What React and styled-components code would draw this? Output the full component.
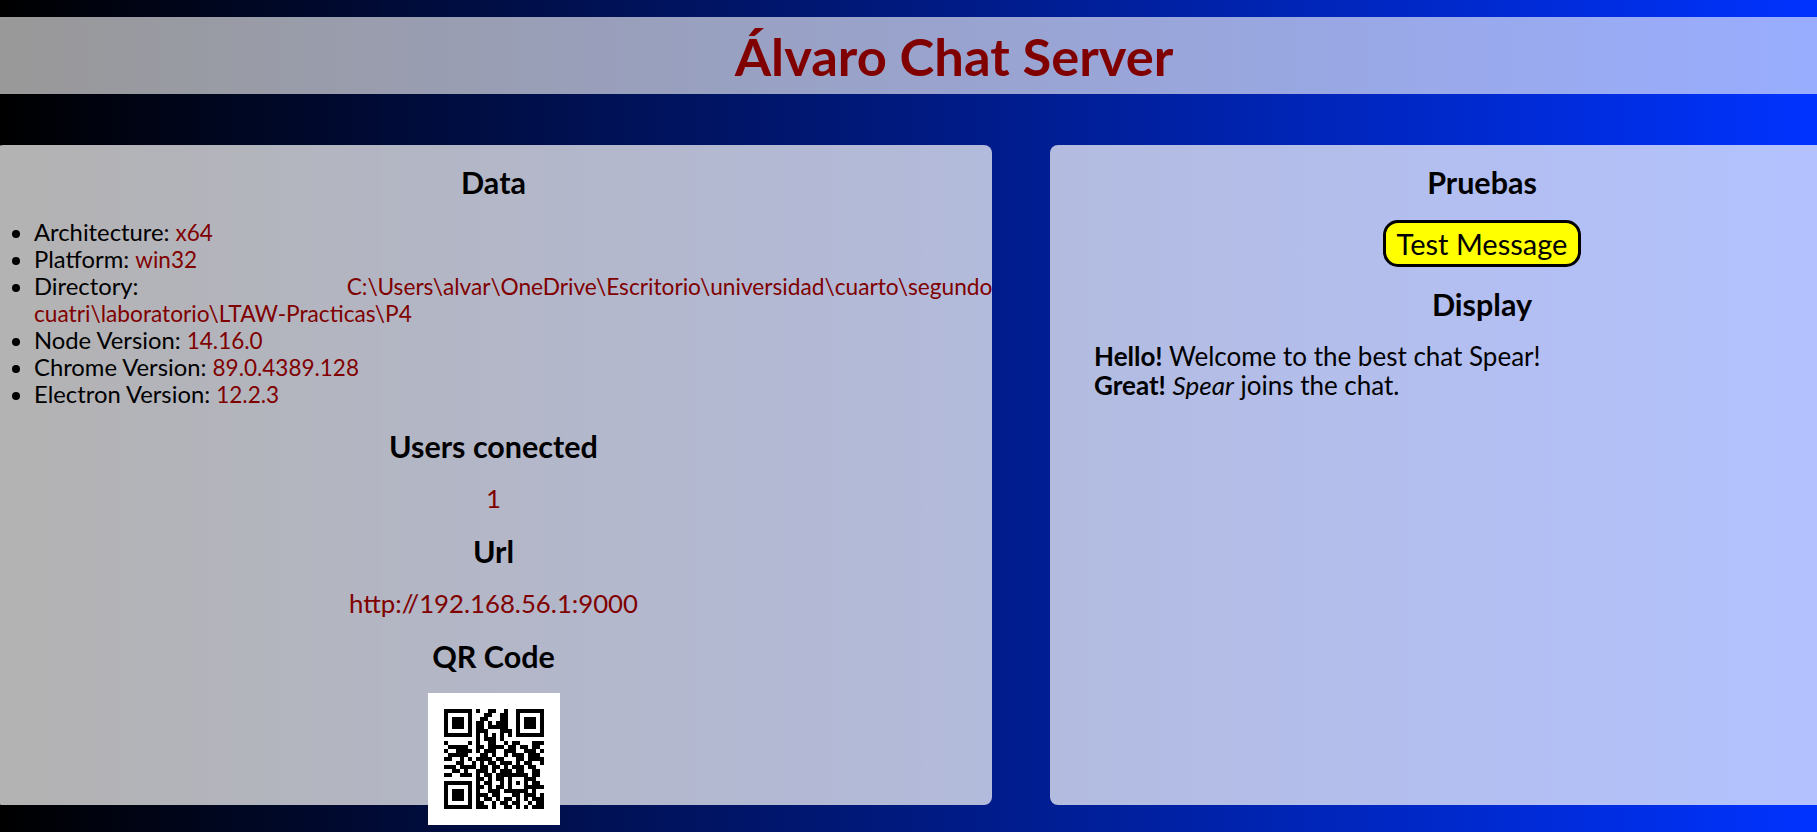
import styled, { createGlobalStyle } from 'styled-components';

const SERVER_URL = 'http://192.168.56.1:9000';

// modules of the code, read off the screenshot
const QR_ROWS = [
  '#######.#..##..#..#######',
  '#.....#...##..##..#.....#',
  '#.###.#..##...##..#.###.#',
  '#.###.#.##.#.###..#.###.#',
  '#.###.#.##.#####..#.###.#',
  '#.....#.###...###.#.....#',
  '#######.#.#.#.#.#.#######',
  '........#.###.#..........',
  '#.....#.#..##..#.##...###',
  '.#####..##.####.##.##.##.',
  '#..####.#.###..###..###.#',
  '.#####...##.#..#.###.###.',
  '##..#.#.####.##...##.####',
  '...##..#.#.##.###.#.##..#',
  '###.####.##.##.#.###.##..',
  '..##.#..###.#.###.##..##.',
  '##..###.#.##.########.##.',
  '........##.#.##.#...###..',
  '#######.#.##..#.#.#.#.##.',
  '#.....#.##.#.##.#...#####',
  '#.###.#.#..###.######.#..',
  '#.###.#.###.##...##.###.#',
  '#.###.#.#.##.#.##.#.#.###',
  '#.....#.##..#.##.##..#.##',
  '#######.###.#..##.#.#.###',
];

function qrPath() {
  let d = '';
  QR_ROWS.forEach((row, y) => {
    [...row].forEach((cell, x) => {
      if (cell === '#') d += `M${x + 4} ${y + 4}h1v1h-1z`;
    });
  });
  return d;
}

const info = [
  ['Architecture:', 'x64'],
  ['Platform:', 'win32'],
];
const versions = [
  ['Node Version:', '14.16.0'],
  ['Chrome Version:', '89.0.4389.128'],
  ['Electron Version:', '12.2.3'],
];

export default function App() {
  return (
    <>
      <GlobalStyle />
      <Page>
        <Banner>Álvaro Chat Server</Banner>
        <Columns>
          <Panel>
            <Heading>Data</Heading>
            <InfoList>
              {info.map(([label, value]) => (
                <li key={label}>
                  {label} <Value>{value}</Value>
                </li>
              ))}
              <li>
                Directory:{' '}
                <PathValue>C:\Users\alvar\OneDrive\Escritorio\universidad\cuarto\segundo cuatri\laboratorio\LTAW-Practicas\P4</PathValue>
              </li>
              {versions.map(([label, value]) => (
                <li key={label}>
                  {label} <Value>{value}</Value>
                </li>
              ))}
            </InfoList>
            <Heading>Users conected</Heading>
            <CenterValue>1</CenterValue>
            <Heading>Url</Heading>
            <CenterValue>{SERVER_URL}</CenterValue>
            <Heading>QR Code</Heading>
            <QrImage viewBox="0 0 33 33" shapeRendering="crispEdges" role="img" aria-label="QR code">
              <rect width="33" height="33" fill="#fff" />
              <path d={qrPath()} fill="#000" />
            </QrImage>
          </Panel>
          <Panel>
            <Heading>Pruebas</Heading>
            <TestButton>Test Message</TestButton>
            <Heading>Display</Heading>
            <ChatLog>
              <strong>Hello!</strong> Welcome to the best chat Spear!
              <br />
              <strong>Great!</strong> <em>Spear</em> joins the chat.
            </ChatLog>
          </Panel>
        </Columns>
      </Page>
    </>
  );
}

const GlobalStyle = createGlobalStyle`
  html, body {
    margin: 0;
    height: 100%;
    overflow: hidden;
  }
  body {
    font-family: Lato, "Noto Sans", sans-serif;
    color: #000;
  }
`;

const Page = styled.div`
  height: 832px;
  padding-top: 17px;
  box-sizing: border-box;
  overflow: hidden;
  background: linear-gradient(to right, #000, #0033ff);
`;

const Banner = styled.h1`
  width: 1918px;
  height: 77px;
  margin: 0 0 51px -5px;
  border-radius: 6px;
  background: rgba(255, 255, 255, 0.6);
  color: #800000;
  font-size: 52.5px;
  font-weight: 700;
  line-height: 77px;
  text-align: center;
`;

const Columns = styled.div`
  display: grid;
  grid-template-columns: 997px 864px;
  gap: 58px;
  height: 660px;
  margin-left: -5px;
`;

const Panel = styled.section`
  height: 660px;
  box-sizing: border-box;
  padding-top: 18px;
  border-radius: 8px;
  background: rgba(255, 255, 255, 0.7);
  text-align: center;
`;

const Heading = styled.h2`
  margin: 0;
  font-size: 30.5px;
  font-weight: 700;
  line-height: 38px;
`;

const InfoList = styled.ul`
  margin: 18px -30px 19px 0;
  padding-left: 39px;
  text-align: left;
  font-size: 23.8px;
  line-height: 27px;
`;

const Value = styled.span`
  color: #800000;
  font-size: 22.5px;
`;

const PathValue = styled(Value)`
  margin-left: 202px;
  font-size: 22.7px;
`;

const CenterValue = styled.p`
  margin: 19px 0 20px;
  color: #800000;
  font-size: 25.75px;
  line-height: 28px;
`;

const TestButton = styled.button`
  display: block;
  width: 198px;
  height: 47px;
  margin: 19px auto 18px;
  padding: 0;
  border: 3px solid #000;
  border-radius: 15px;
  background: #ffff00;
  color: #000;
  font-family: inherit;
  font-size: 29px;
`;

const ChatLog = styled.p`
  margin: 19px 0 0;
  padding-left: 44px;
  text-align: left;
  font-size: 26px;
  line-height: 29px;
`;

const QrImage = styled.svg`
  display: block;
  width: 132px;
  height: 132px;
  margin: 18px auto 0;
`;
